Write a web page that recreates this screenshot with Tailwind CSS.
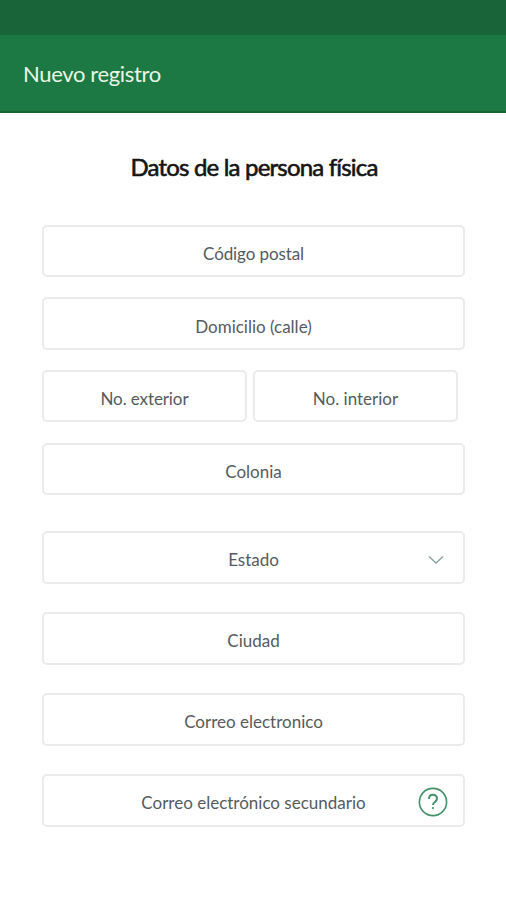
<!DOCTYPE html>
<html lang="es"><head><meta charset="utf-8"><title>Nuevo registro</title>
<script src="https://cdn.jsdelivr.net/npm/@tailwindcss/browser@4"></script></head>
<body class="h-[900px] w-[506px] overflow-hidden bg-white font-['Lato',sans-serif] text-[17px] leading-6 text-[#555b60]">
<div class="h-[35px] bg-[#196539]"></div>
<header class="flex h-[78px] items-center border-b-2 border-[#14682f] bg-[#1d7943] px-[23px] pt-[2px] text-[22px] tracking-[-0.35px] text-[#e9f5e5]"><h1>Nuevo registro</h1></header>
<main class="px-[42px]">
<h2 class="pt-[38px] pl-[2px] text-center text-[24px] leading-8 tracking-[-0.82px] text-[#151515] [-webkit-text-stroke:0.6px_#151515]">Datos de la persona física</h2>
<form class="mt-[42px] w-[423px]">
<div class="flex h-[52px] items-center justify-center rounded-[5px] border-2 border-[#ebebed] pt-[6px] tracking-[-0.1px]">Código postal</div>
<div class="mt-[20px] flex h-[53px] items-center justify-center rounded-[5px] border-2 border-[#ebebed] pt-[6px]">Domicilio (calle)</div>
<div class="mt-[20px] flex gap-[6px]">
<div class="flex h-[52px] w-[205px] items-center justify-center rounded-[5px] border-2 border-[#ebebed] pt-[6px] tracking-[-0.1px]">No. exterior</div>
<div class="flex h-[52px] w-[205px] items-center justify-center rounded-[5px] border-2 border-[#ebebed] pt-[6px]">No. interior</div>
</div>
<div class="mt-[21px] flex h-[52px] items-center justify-center rounded-[5px] border-2 border-[#ebebed] pt-[6px]">Colonia</div>
<div class="relative mt-[36px] flex h-[53px] items-center justify-center rounded-[5px] border-2 border-[#ebebed] pt-[5px]">Estado
<svg class="absolute top-[22px] right-[19px]" width="16" height="10" viewBox="0 0 16 10" fill="none" stroke="#86a59f" stroke-width="1.4"><path d="M1 1.5 8 8 15 1.5"/></svg></div>
<div class="mt-[28px] flex h-[53px] items-center justify-center rounded-[5px] border-2 border-[#ebebed] pt-[5px]">Ciudad</div>
<div class="mt-[28px] flex h-[53px] items-center justify-center rounded-[5px] border-2 border-[#ebebed] pt-[5px]">Correo electronico</div>
<div class="relative mt-[28px] flex h-[53px] items-center justify-center rounded-[5px] border-2 border-[#ebebed] pt-[5px]">Correo electrónico secundario
<svg class="absolute top-[11px] right-[15px]" width="30" height="30" viewBox="0 0 30 30" fill="none" stroke="#43906a" stroke-width="1.6"><circle cx="15" cy="15" r="13.6"/><path d="M11 12c0-5.5 8-5.5 8-.4 0 3.6-4 3.2-4 6.4" stroke-width="2"/><circle cx="15" cy="21" r="1.1" fill="#43906a" stroke="none"/></svg></div>
</form></main></body></html>
